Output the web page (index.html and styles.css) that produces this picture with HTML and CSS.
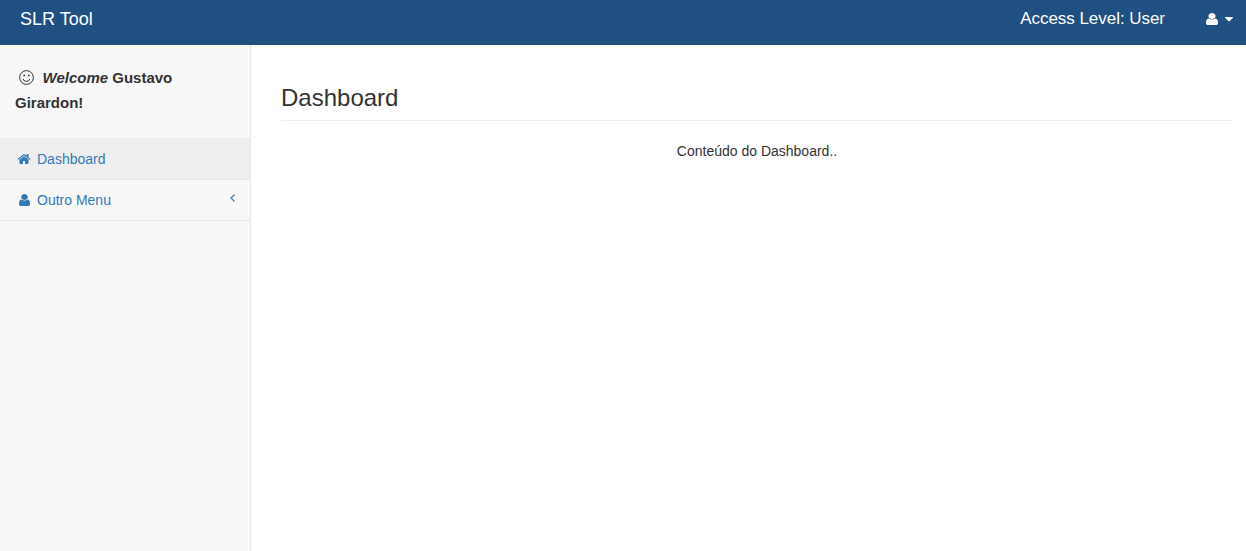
FILE: index.html
```html
<!DOCTYPE html>
<html lang="pt-BR">
<head>
<meta charset="utf-8">
<title>SLR Tool</title>
<link rel="stylesheet" href="styles.css">
</head>
<body>
<header class="navbar">
  <a class="brand">SLR Tool</a>
  <div class="navbar-right">
    <span class="access">Access Level: User</span>
    <a class="user-menu">
      <svg class="icon person" viewBox="0 128 1408 1536" preserveAspectRatio="none"><path transform="scale(1.1 1)" d="M1280 1399q0 109-62.500 187t-150.500 78h-854q-88 0-150.500-78t-62.500-187q0-85 8.500-160.500t31.500-152 58.500-131 94-89 134.500-34.500q131 128 313 128t313-128q76 0 134.500 34.500t94 89 58.500 131 31.500 152 8.500 160.500zm-256-887q0 159-112.500 271.500t-271.500 112.500-271.500-112.500-112.500-271.500 112.500-271.500 271.500-112.500 271.500 112.500 112.500 271.500z"/></svg>
      <svg class="caret" viewBox="0 0 8 5"><path d="M.5 0h7q.5 0 .5.5 0 .2-.2.400L4.400 4.300q-.4.400-.8 0L.2.900Q0 .7 0 .5 0 0 .5 0z"/></svg>
    </a>
  </div>
</header>
<div class="page">
  <aside class="sidebar">
    <p class="welcome"><svg class="smile" viewBox="0 0 15 15"><circle cx="7.500" cy="7.500" r="6.900"/><path d="M4.200 9q.8 2.400 3.300 2.400T10.800 9"/><circle class="eye" cx="5.200" cy="5.400" r=".9"/><circle class="eye" cx="9.800" cy="5.400" r=".9"/></svg><em>Welcome</em> Gustavo Girardon!</p>
    <nav class="menu">
      <a class="item active"><svg class="icon" viewBox="0 0 1792 1792"><path d="M1472 992v480q0 26-19 45t-45 19h-384v-384h-256v384h-384q-26 0-45-19t-19-45v-480q0-1 .5-3t.5-3l575-474 575 474q1 2 1 6zm223-69l-62 74q-8 9-21 11h-3q-13 0-21-7l-692-577-692 577q-12 8-24 7-13-2-21-11l-62-74q-8-10-7-23.500t11-21.500l719-599q32-26 76-26t76 26l244 204v-195q0-14 9-23t23-9h192q14 0 23 9t9 23v408l219 182q10 8 11 21.500t-7 23.500z"/></svg><span>Dashboard</span></a>
      <a class="item"><svg class="icon person" viewBox="0 128 1408 1536" preserveAspectRatio="none"><path transform="scale(1.1 1)" d="M1280 1399q0 109-62.500 187t-150.500 78h-854q-88 0-150.500-78t-62.500-187q0-85 8.500-160.500t31.500-152 58.500-131 94-89 134.500-34.500q131 128 313 128t313-128q76 0 134.500 34.500t94 89 58.500 131 31.500 152 8.500 160.500zm-256-887q0 159-112.500 271.500t-271.500 112.500-271.500-112.500-112.500-271.500 112.500-271.500 271.500-112.500 271.500 112.500 112.500 271.500z"/></svg><span>Outro Menu</span><svg class="arrow" viewBox="0 0 5 8"><path d="M4.500.5 1 4l3.500 3.500"/></svg></a>
    </nav>
  </aside>
  <main class="content">
    <h1 class="title">Dashboard</h1>
    <p class="text">Conteúdo do Dashboard..</p>
  </main>
</div>
</body>
</html>
```
FILE: styles.css
```css
* { box-sizing: border-box; }
body {
  margin: 0;
  height: 551px;
  display: flex;
  flex-direction: column;
  font: 14px/20px "Liberation Sans", Arial, sans-serif;
  color: #333;
  background: #fff;
}
.navbar {
  height: 45px;
  padding: 8px 13px 0 20px;
  display: flex;
  justify-content: space-between;
  background: #205081;
  color: #fff;
  line-height: 20px;
}
.brand { font-size: 18px; padding-top: 1px; }
.navbar-right { display: flex; font-size: 17px; }
.access { padding-top: 1px; letter-spacing: -0.04px; }
.user-menu { display: flex; align-items: center; height: 22px; margin-left: 41px; }
.icon { width: 14px; height: 14px; fill: currentColor; flex: none; }
.icon.person { width: 12px; height: 12px; }
.item .person { width: 11px; margin: 0 1px 0 2px; }
.caret { width: 8px; height: 5px; margin-left: 7px; fill: currentColor; }
.page { flex: 1; display: flex; }
.sidebar {
  width: 251px;
  background: #f8f8f8;
  border-right: 1px solid #e7e7e7;
}
.welcome {
  margin: 0;
  height: 93px;
  padding: 20px 60px 0 15px;
  font-size: 15px;
  line-height: 25px;
  font-weight: bold;
}
.smile {
  width: 15px;
  height: 15px;
  margin: 0 8.500px 0 4px;
  vertical-align: -2px;
  fill: none;
  stroke: #333;
  stroke-width: 1;
}
.smile .eye { fill: #333; stroke: none; }
.menu { border-top: 1px solid #e7e7e7; }
.item {
  height: 41px;
  padding: 0 15px 0 17px;
  display: flex;
  align-items: center;
  border-bottom: 1px solid #e7e7e7;
  color: #337ab7;
}
.item.active { background: #eee; }
.item span { margin-left: 6px; }
.arrow {
  width: 5px;
  height: 8px;
  margin: 0 0 5px auto;
  fill: none;
  stroke: currentColor;
  stroke-width: 1.2;
}
.content { flex: 1; padding: 39px 13px 0 30px; }
.title {
  margin: 0 0 20px;
  height: 37px;
  font-size: 24px;
  line-height: 28px;
  font-weight: normal;
  border-bottom: 1px solid #eee;
}
.text { margin: 0; text-align: center; }
```
